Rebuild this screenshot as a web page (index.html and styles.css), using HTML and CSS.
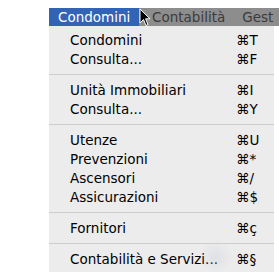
FILE: index.html
```html
<!DOCTYPE html>
<html>
<head>
<meta charset="utf-8">
<link rel="stylesheet" href="styles.css">
</head>
<body>
<div class="screen">
  <div class="menubar">
    <div class="title active">Condomini</div>
    <div class="title t2">Contabilità</div>
    <div class="title t3">Gest</div>
    <svg class="cursor" width="12" height="19" viewBox="0 0 12 19">
      <path d="M1 1 L1 15 L4.5 11.5 L7 17.5 L9 16.6 L6.6 10.8 L11 10.8 Z" fill="#000" stroke="#fff" stroke-width="1" stroke-linejoin="round"/>
    </svg>
  </div>
  <div class="menu">
    <div class="item"><span class="label">Condomini</span><span class="key">⌘T</span></div>
    <div class="item"><span class="label">Consulta...</span><span class="key">⌘F</span></div>
    <div class="sep"></div>
    <div class="item"><span class="label">Unità Immobiliari</span><span class="key">⌘I</span></div>
    <div class="item"><span class="label">Consulta...</span><span class="key">⌘Y</span></div>
    <div class="sep"></div>
    <div class="item"><span class="label">Utenze</span><span class="key">⌘U</span></div>
    <div class="item"><span class="label">Prevenzioni</span><span class="key">⌘*</span></div>
    <div class="item"><span class="label">Ascensori</span><span class="key">⌘/</span></div>
    <div class="item"><span class="label">Assicurazioni</span><span class="key">⌘$</span></div>
    <div class="sep"></div>
    <div class="item"><span class="label">Fornitori</span><span class="key">⌘ç</span></div>
    <div class="sep"></div>
    <div class="item"><span class="label">Contabilità e Servizi...</span><span class="key">⌘§</span></div>
    <div class="blob"></div>
  </div>
</div>
</body>
</html>
```
FILE: styles.css
```css
html, body {
  margin: 0;
  padding: 0;
  background: #ffffff;
}
body {
  font-family: "DejaVu Sans", "Liberation Sans", sans-serif;
  font-size: 13.5px;
}
.screen {
  padding-top: 8px;
  padding-left: 49px;
}
.menubar {
  position: relative;
  height: 18px;
  display: flex;
  align-items: center;
  background: #8d8d8d;
  overflow: hidden;
  white-space: nowrap;
}
.title {
  height: 18px;
  line-height: 18px;
  color: #3b3b3b;
}
.title.active {
  background: #3363b5;
  color: #ffffff;
  width: 90px;
  padding-left: 9px;
  box-sizing: border-box;
}
.t2 {
  margin-left: 13px;
}
.t3 {
  margin-left: 17px;
}
.cursor {
  position: absolute;
  left: 90px;
  top: 0;
}
.menu {
  position: relative;
  width: 225px;
  background: #ececec;
  padding: 4px 0;
}
.item {
  height: 19px;
  display: flex;
  align-items: center;
  padding-left: 21px;
  color: #000;
}
.label {
  flex: 1;
}
.key {
  width: 38px;
}
.sep {
  height: 12px;
  box-sizing: border-box;
  padding-top: 6px;
}
.sep::before {
  content: "";
  display: block;
  height: 1px;
  background: #cdcdcd;
}
.blob {
  position: absolute;
  left: 150px;
  top: 214px;
  width: 34px;
  height: 34px;
  border-radius: 50%;
  background: radial-gradient(circle, rgba(200,205,220,0.35), rgba(236,236,236,0) 70%);
}
```
